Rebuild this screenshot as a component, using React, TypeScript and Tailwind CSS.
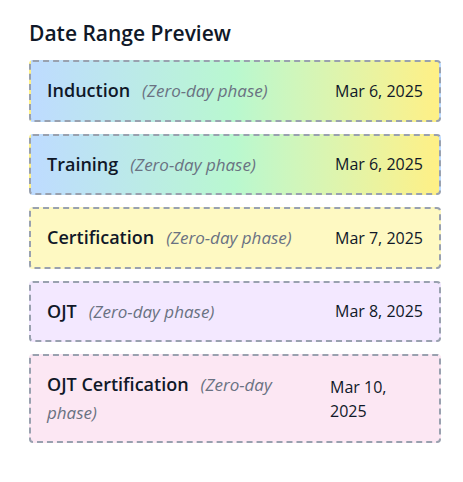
import React from "react";

type Phase = {
  name: string;
  date: string;
  bg: string;
};

const phases: Phase[] = [
  { name: "Induction", date: "Mar 6, 2025", bg: "bg-gradient-to-r from-blue-200 via-green-200 to-yellow-200" },
  { name: "Training", date: "Mar 6, 2025", bg: "bg-gradient-to-r from-blue-200 via-green-200 to-yellow-200" },
  { name: "Certification", date: "Mar 7, 2025", bg: "bg-yellow-100" },
  { name: "OJT", date: "Mar 8, 2025", bg: "bg-purple-100" },
  { name: "OJT Certification", date: "Mar 10, 2025", bg: "bg-pink-100" },
];

export default function App() {
  return (
    <div
      className="min-h-screen bg-white pl-[29px] pr-[22px] pt-[19px] text-gray-900"
      style={{ fontFamily: '"Open Sans", "Noto Sans", sans-serif' }}
    >
      <h2 className="mb-[13px] text-[21px] font-semibold leading-7">Date Range Preview</h2>
      <div className="flex flex-col gap-3">
        {phases.map((p) => (
          <div
            key={p.name}
            className={`flex items-center justify-between gap-4 rounded border-2 border-dashed border-gray-400 px-4 py-[15px] ${p.bg}`}
          >
            <div className="text-lg leading-[27.5px]">
              <span className="font-semibold">{p.name}</span>
              <span className="ml-3 text-[17px] italic text-gray-500">(Zero-day phase)</span>
            </div>
            <div className="text-base leading-6">{p.date}</div>
          </div>
        ))}
      </div>
    </div>
  );
}
